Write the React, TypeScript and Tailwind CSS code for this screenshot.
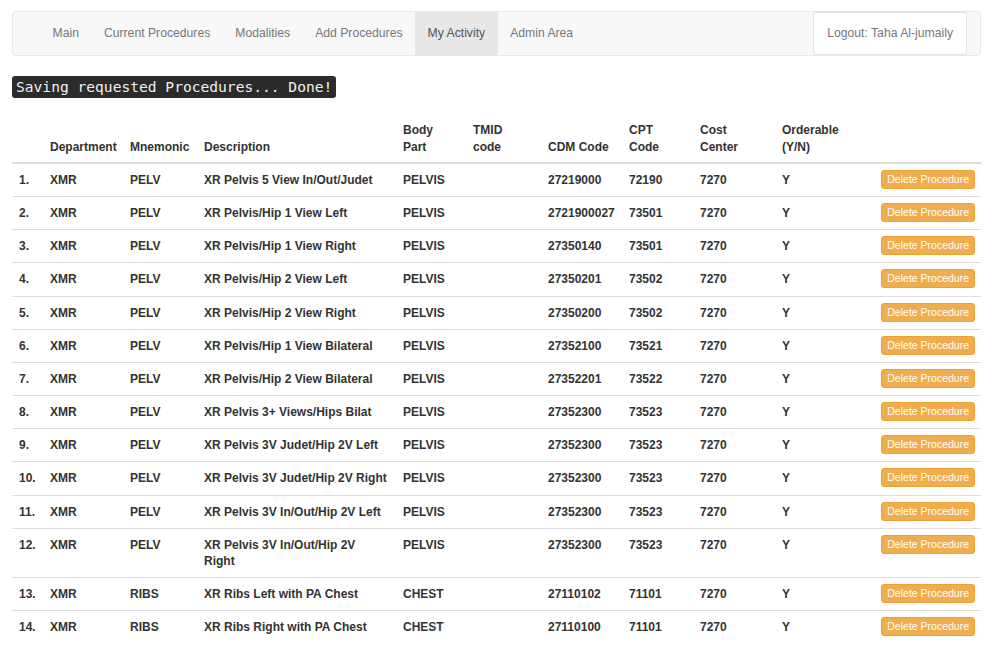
import React from "react";

type Row = [string, string, string, string, string, string, string];

const rows: Row[] = [
  ["PELV", "XR Pelvis 5 View In/Out/Judet", "PELVIS", "27219000", "72190", "7270", "Y"],
  ["PELV", "XR Pelvis/Hip 1 View Left", "PELVIS", "2721900027", "73501", "7270", "Y"],
  ["PELV", "XR Pelvis/Hip 1 View Right", "PELVIS", "27350140", "73501", "7270", "Y"],
  ["PELV", "XR Pelvis/Hip 2 View Left", "PELVIS", "27350201", "73502", "7270", "Y"],
  ["PELV", "XR Pelvis/Hip 2 View Right", "PELVIS", "27350200", "73502", "7270", "Y"],
  ["PELV", "XR Pelvis/Hip 1 View Bilateral", "PELVIS", "27352100", "73521", "7270", "Y"],
  ["PELV", "XR Pelvis/Hip 2 View Bilateral", "PELVIS", "27352201", "73522", "7270", "Y"],
  ["PELV", "XR Pelvis 3+ Views/Hips Bilat", "PELVIS", "27352300", "73523", "7270", "Y"],
  ["PELV", "XR Pelvis 3V Judet/Hip 2V Left", "PELVIS", "27352300", "73523", "7270", "Y"],
  ["PELV", "XR Pelvis 3V Judet/Hip 2V Right", "PELVIS", "27352300", "73523", "7270", "Y"],
  ["PELV", "XR Pelvis 3V In/Out/Hip 2V Left", "PELVIS", "27352300", "73523", "7270", "Y"],
  ["PELV", "XR Pelvis 3V In/Out/Hip 2V\nRight", "PELVIS", "27352300", "73523", "7270", "Y"],
  ["RIBS", "XR Ribs Left with PA Chest", "CHEST", "27110102", "71101", "7270", "Y"],
  ["RIBS", "XR Ribs Right with PA Chest", "CHEST", "27110100", "71101", "7270", "Y"],
];

const navItems = ["Main", "Current Procedures", "Modalities", "Add Procedures", "My Activity", "Admin Area"];

export default function App() {
  return (
    <div
      className="w-[1000px] h-[651px] overflow-hidden bg-white px-[12px] pt-[11px] text-[#333]"
      style={{ fontFamily: '"Liberation Sans", Arial, sans-serif' }}
    >
      {/* Navbar */}
      <div className="h-[45px] w-[969px] rounded-[4px] border border-[#e7e7e7] bg-[#f8f8f8] flex items-stretch">
        <ul className="flex items-stretch ml-[27px] text-[12.2px] text-[#777]">
          {navItems.map((n) => (
            <li
              key={n}
              className={
                "flex items-center px-[12.5px] " +
                (n === "My Activity" ? "bg-[#e7e7e7] text-[#555]" : "")
              }
            >
              {n}
            </li>
          ))}
        </ul>
        <div className="ml-auto mr-[13px] flex items-stretch">
          <div className="flex items-center px-[13px] bg-white border border-[#e3e3e3] rounded-[3px] text-[12.2px] text-[#777]">
            Logout: Taha Al-jumaily
          </div>
        </div>
      </div>

      {/* Message */}
      <div className="mt-[20px] flex">
        <span
          className="block h-[22px] leading-[22px] px-[4px] rounded-[3px] bg-[#2b2b2b] text-[#f0f0f0] text-[14.6px]"
          style={{ fontFamily: '"DejaVu Sans Mono", "Liberation Mono", monospace' }}
        >
          Saving requested Procedures... Done!
        </span>
      </div>

      {/* Table */}
      <table className="mt-[16px] w-[969px] table-fixed border-collapse text-[12px] font-bold leading-[16px]">
        <colgroup>
          <col className="w-[30px]" />
          <col className="w-[80px]" />
          <col className="w-[74px]" />
          <col className="w-[199px]" />
          <col className="w-[70px]" />
          <col className="w-[75px]" />
          <col className="w-[81px]" />
          <col className="w-[71px]" />
          <col className="w-[82px]" />
          <col className="w-[101px]" />
          <col className="w-[106px]" />
        </colgroup>
        <thead className="leading-[17px]">
          <tr className="border-b-2 border-[#ddd] text-left align-bottom">
            <th className="px-[8px] pt-[8px] pb-[6px]"></th>
            <th className="px-[8px] pt-[8px] pb-[6px]">Department</th>
            <th className="px-[8px] pt-[8px] pb-[6px]">Mnemonic</th>
            <th className="px-[8px] pt-[8px] pb-[6px]">Description</th>
            <th className="px-[8px] pt-[8px] pb-[6px]">
              Body
              <br />
              Part
            </th>
            <th className="px-[8px] pt-[8px] pb-[6px]">
              TMID
              <br />
              code
            </th>
            <th className="px-[8px] pt-[8px] pb-[6px]">CDM Code</th>
            <th className="px-[8px] pt-[8px] pb-[6px]">
              CPT
              <br />
              Code
            </th>
            <th className="px-[8px] pt-[8px] pb-[6px]">
              Cost
              <br />
              Center
            </th>
            <th className="px-[8px] pt-[8px] pb-[6px]">
              Orderable
              <br />
              (Y/N)
            </th>
            <th className="px-[8px] pt-[8px] pb-[6px]"></th>
          </tr>
        </thead>
        <tbody className="leading-[16.15px]">
          {rows.map((r, i) => (
            <tr key={i} className="border-t border-[#ddd] align-top">
              <td className="py-[8px] pl-[7px] pr-0 whitespace-nowrap">{i + 1}.</td>
              <td className="p-[8px]">XMR</td>
              <td className="p-[8px]">{r[0]}</td>
              <td className="py-[8px] pl-[8px] pr-0 whitespace-nowrap">
                {r[1].split("\n").map((line, k) => (
                  <React.Fragment key={k}>
                    {k > 0 && <br />}
                    {line}
                  </React.Fragment>
                ))}
              </td>
              <td className="p-[8px]">{r[2]}</td>
              <td className="p-[8px]"></td>
              <td className="p-[8px]">{r[3]}</td>
              <td className="p-[8px]">{r[4]}</td>
              <td className="p-[8px]">{r[5]}</td>
              <td className="p-[8px]">{r[6]}</td>
              <td className="pt-[6px] pb-[6px] pr-[6px]">
                <div className="flex justify-end">
                  <span className="block h-[19px] rounded-[3px] border border-[#eea236] bg-[#f0ad4e] px-[5px] text-[10.5px] font-normal leading-[17px] text-white">
                    Delete Procedure
                  </span>
                </div>
              </td>
            </tr>
          ))}
        </tbody>
      </table>
    </div>
  );
}
